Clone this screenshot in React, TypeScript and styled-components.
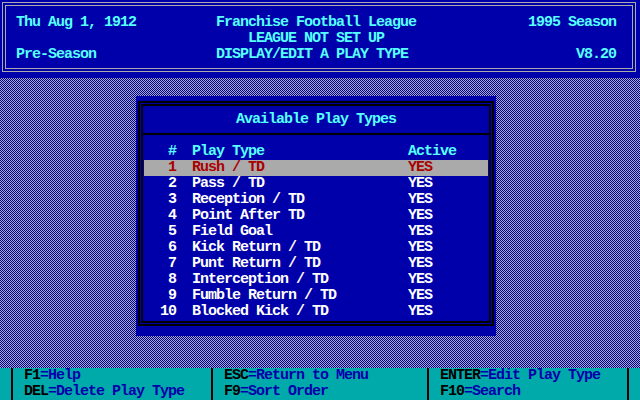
import React from "react";
import styled, { createGlobalStyle } from "styled-components";

const GlobalStyle = createGlobalStyle`
  html, body { margin: 0; padding: 0; background: #0000AA; }
  body { width: 640px; height: 400px; overflow: hidden; }
  #root { width: 640px; height: 400px; }
`;

const Screen = styled.div`
  width: 640px;
  height: 400px;
  display: flex;
  flex-direction: column;
  font-family: "Liberation Mono", "Courier New", monospace;
  font-weight: bold;
  font-size: 15px;
  line-height: 16px;
  letter-spacing: -1px;
`;

const Header = styled.header`
  flex: none;
  height: 78px;
  box-sizing: border-box;
  padding: 2px 4px 6px 2px;
  background: #0000aa;
`;

const FrameOuter = styled.div`
  height: 100%;
  box-sizing: border-box;
  border: 1px solid #aaaaaa;
  padding: 2px;
`;

const FrameInner = styled.div`
  height: 100%;
  box-sizing: border-box;
  border: 1px solid #aaaaaa;
  padding: 9px 16px 0 10px;
  display: grid;
  grid-template-columns: 200px 200px 200px;
  color: #55ffff;
`;

const HeaderCol = styled.div`
  display: flex;
  flex-direction: column;
`;

const HeaderLine = styled.div<{ $align?: "left" | "center" | "right" }>`
  height: 16px;
  white-space: pre;
  text-align: ${(p) => p.$align || "left"};
`;

const Desk = styled.main`
  flex: 1;
  background: repeating-conic-gradient(#aaaaaa 0% 25%, #0000aa 0% 50%) 0 0 / 2px 2px;
  padding: 18px 0 0 136px;
`;

const Box = styled.section`
  width: 360px;
  height: 240px;
  box-sizing: border-box;
  background: #0000aa;
  padding: 5px 2px 10px 2px;
`;

const BoxOuterLine = styled.div`
  height: 100%;
  box-sizing: border-box;
  border: 2px solid #000;
  padding: 1px;
`;

const BoxInnerLine = styled.div`
  height: 100%;
  box-sizing: border-box;
  border: 2px solid #000;
  padding: 6px 0 1px;
  display: flex;
  flex-direction: column;
`;

const Title = styled.h1`
  margin: 0;
  font: inherit;
  height: 16px;
  text-align: center;
  color: #55ffff;
`;

const Divider = styled.div`
  height: 2px;
  margin: 5px 0 9px;
  background: #000;
`;

const Row = styled.div<{ $selected?: boolean; $head?: boolean }>`
  display: flex;
  height: 16px;
  margin: 0 1px;
  white-space: pre;
  background: ${(p) => (p.$selected ? "#aaaaaa" : "transparent")};
  color: ${(p) => (p.$selected ? "#aa0000" : p.$head ? "#55ffff" : "#ffffff")};
`;

const NumCell = styled.span`
  width: 32px;
  text-align: right;
`;

const NameCell = styled.span`
  width: 216px;
  margin-left: 16px;
`;

const ActiveCell = styled.span`
  flex: 1;
`;

const Footer = styled.footer`
  flex: none;
  height: 32px;
  background: #00aaaa;
  display: flex;
  padding-left: 11px;
`;

const FooterCell = styled.div<{ $w: number }>`
  width: ${(p) => p.$w}px;
  box-sizing: border-box;
  border-left: 2px solid #000;
  padding-left: 11px;
  display: flex;
  flex-direction: column;
`;

const FooterLine = styled.div`
  height: 16px;
  white-space: pre;
  color: #0000aa;
`;

const Key = styled.span`
  color: #000;
`;

const playTypes = [
  "Rush / TD",
  "Pass / TD",
  "Reception / TD",
  "Point After TD",
  "Field Goal",
  "Kick Return / TD",
  "Punt Return / TD",
  "Interception / TD",
  "Fumble Return / TD",
  "Blocked Kick / TD",
];

const Hint = ({ k, label }: { k: string; label: string }) => (
  <FooterLine>
    <Key>{k}</Key>={label}
  </FooterLine>
);

export default function App() {
  return (
    <Screen>
      <GlobalStyle />
      <Header>
        <FrameOuter>
          <FrameInner>
            <HeaderCol>
              <HeaderLine>Thu Aug 1, 1912</HeaderLine>
              <HeaderLine> </HeaderLine>
              <HeaderLine>Pre-Season</HeaderLine>
            </HeaderCol>
            <HeaderCol>
              <HeaderLine>Franchise Football League</HeaderLine>
              <HeaderLine $align="center">LEAGUE NOT SET UP</HeaderLine>
              <HeaderLine>DISPLAY/EDIT A PLAY TYPE</HeaderLine>
            </HeaderCol>
            <HeaderCol>
              <HeaderLine $align="right">1995 Season</HeaderLine>
              <HeaderLine> </HeaderLine>
              <HeaderLine $align="right">V8.20</HeaderLine>
            </HeaderCol>
          </FrameInner>
        </FrameOuter>
      </Header>
      <Desk>
        <Box>
          <BoxOuterLine>
            <BoxInnerLine>
              <Title>Available Play Types</Title>
              <Divider />
              <Row $head>
                <NumCell>#</NumCell>
                <NameCell>Play Type</NameCell>
                <ActiveCell>Active</ActiveCell>
              </Row>
              {playTypes.map((name, i) => (
                <Row key={name} $selected={i === 0}>
                  <NumCell>{i + 1}</NumCell>
                  <NameCell>{name}</NameCell>
                  <ActiveCell>YES</ActiveCell>
                </Row>
              ))}
            </BoxInnerLine>
          </BoxOuterLine>
        </Box>
      </Desk>
      <Footer>
        <FooterCell $w={200}>
          <Hint k="F1" label="Help" />
          <Hint k="DEL" label="Delete Play Type" />
        </FooterCell>
        <FooterCell $w={216}>
          <Hint k="ESC" label="Return to Menu" />
          <Hint k="F9" label="Sort Order" />
        </FooterCell>
        <FooterCell $w={200}>
          <Hint k="ENTER" label="Edit Play Type" />
          <Hint k="F10" label="Search" />
        </FooterCell>
        <FooterCell $w={13} />
      </Footer>
    </Screen>
  );
}
